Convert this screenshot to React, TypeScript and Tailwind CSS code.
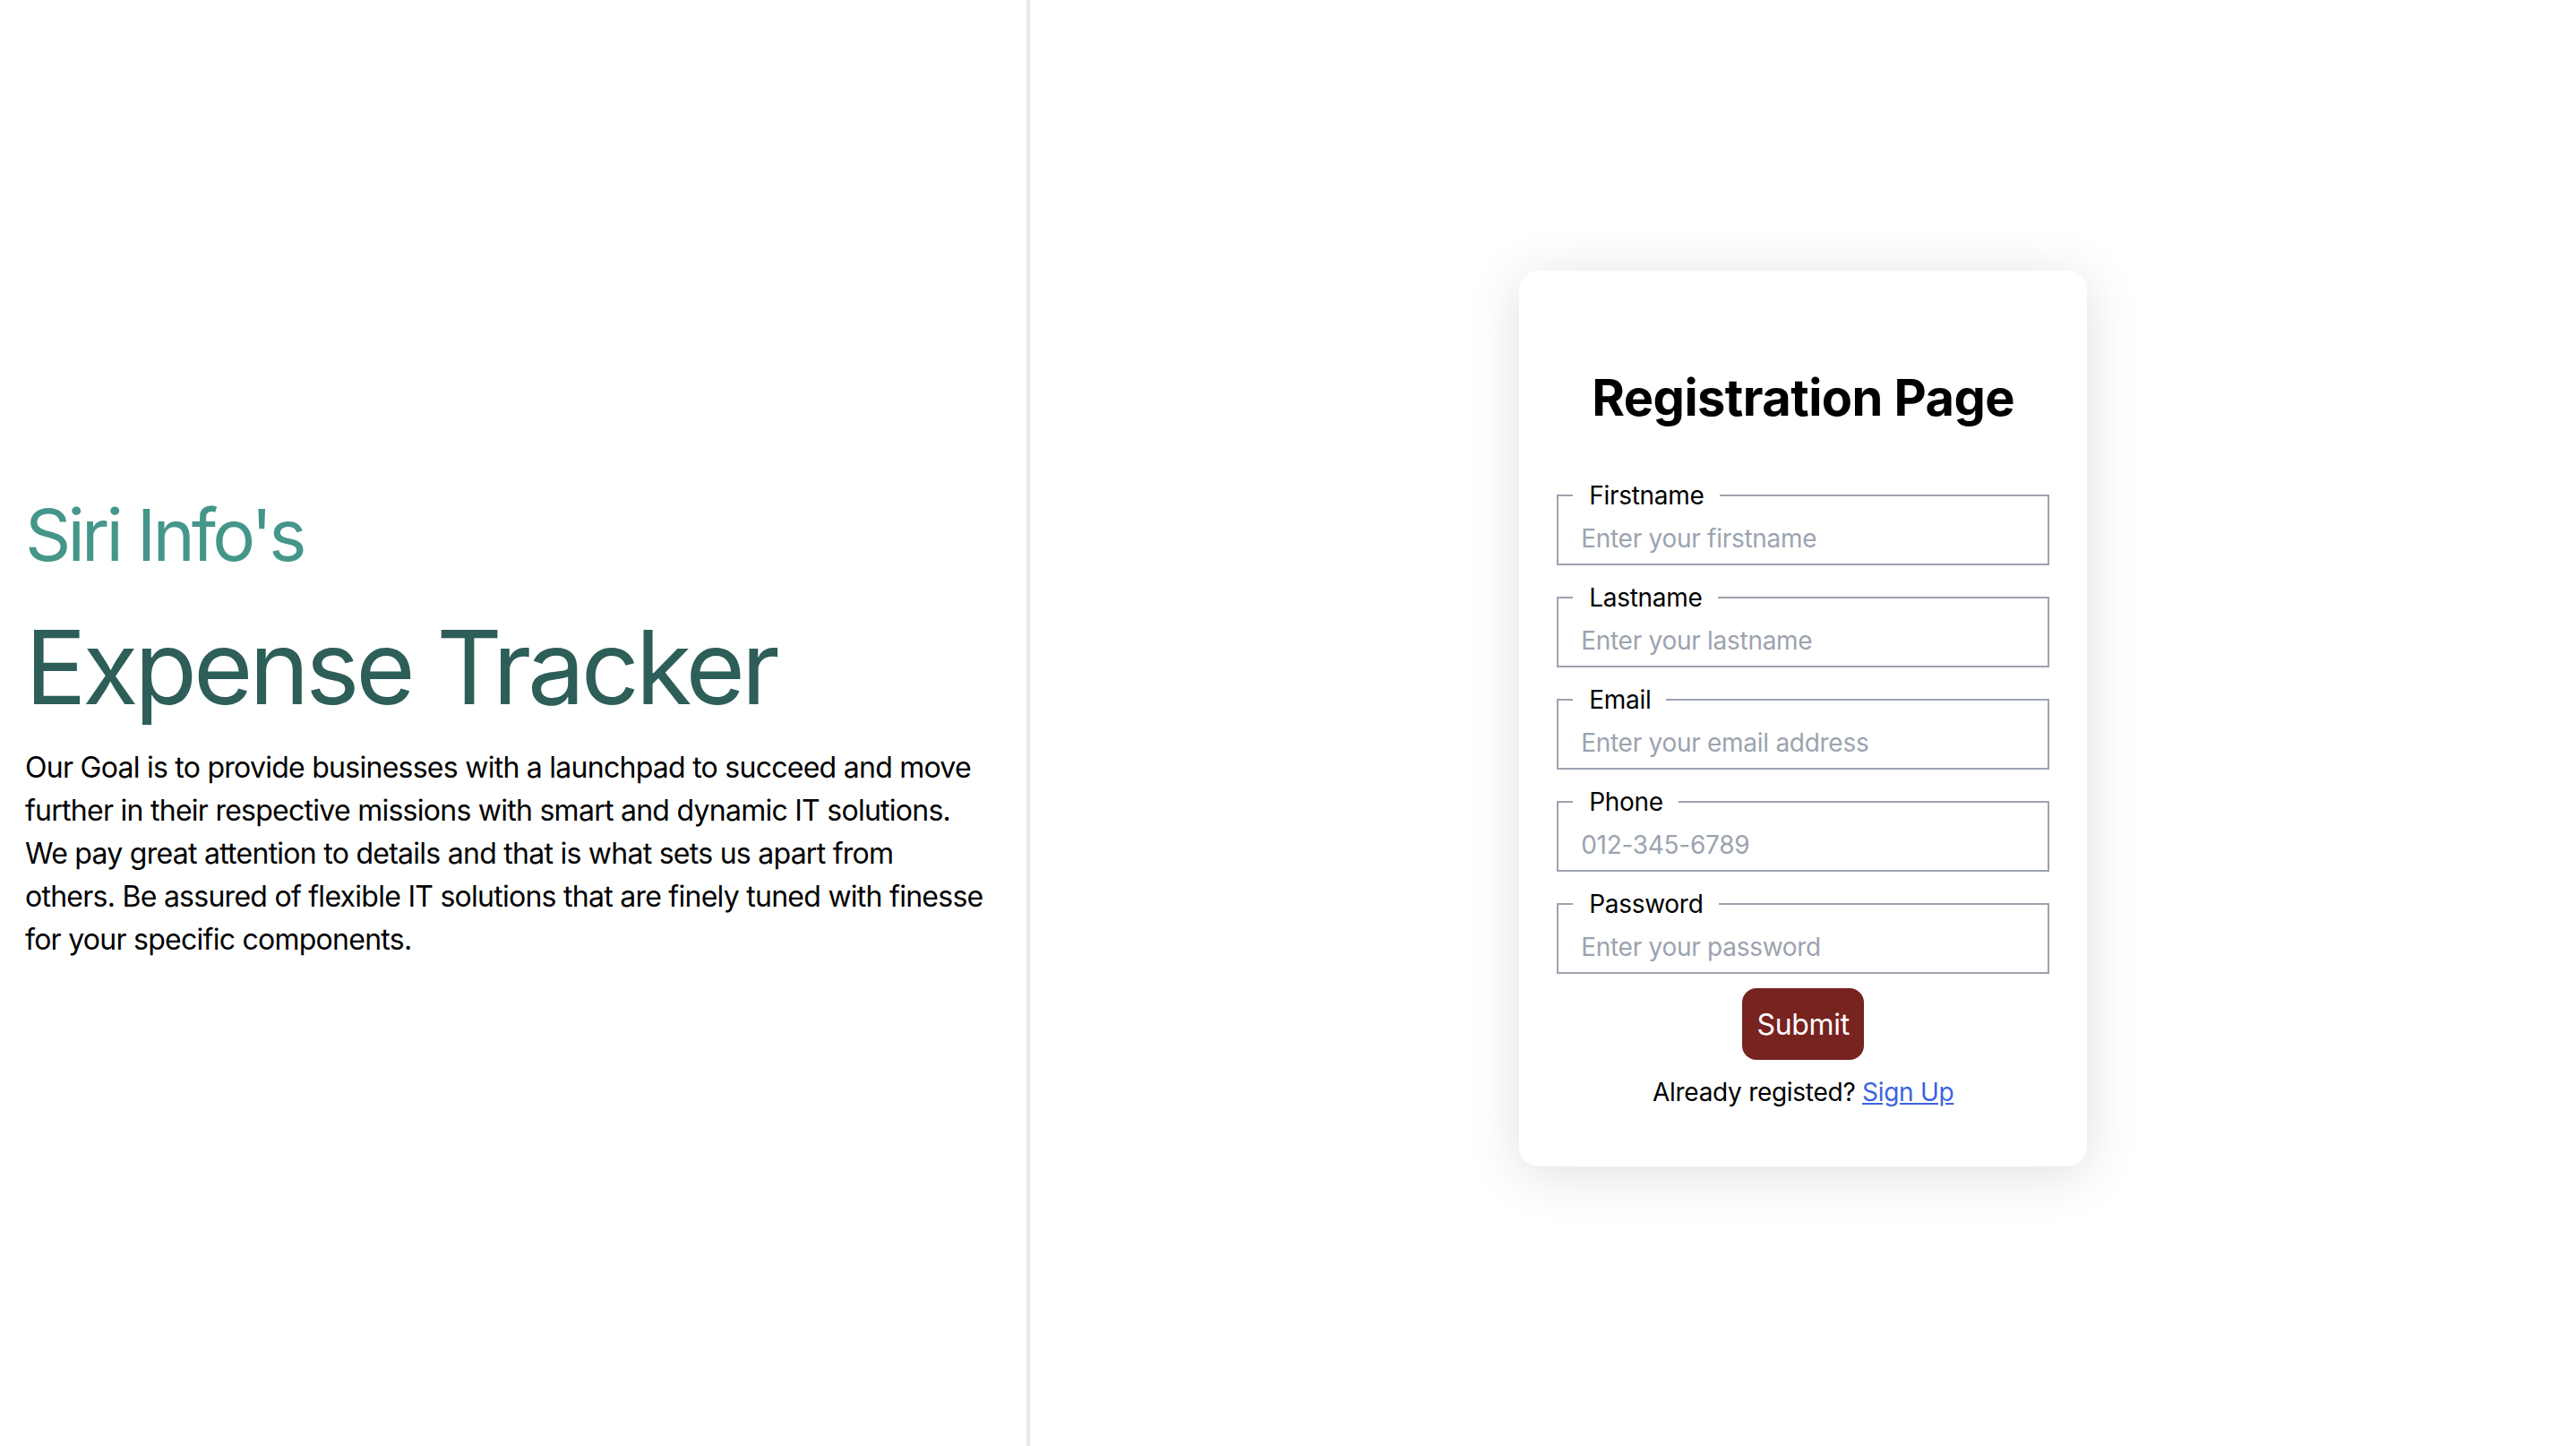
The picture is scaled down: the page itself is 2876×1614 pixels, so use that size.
import React, { useState } from 'react';

type Field = {
  name: string;
  label: string;
  type: string;
  placeholder: string;
};

const fields: Field[] = [
  { name: 'firstname', label: 'Firstname', type: 'text', placeholder: 'Enter your firstname' },
  { name: 'lastname', label: 'Lastname', type: 'text', placeholder: 'Enter your lastname' },
  { name: 'email', label: 'Email', type: 'email', placeholder: 'Enter your email address' },
  { name: 'phone', label: 'Phone', type: 'tel', placeholder: '012-345-6789' },
  { name: 'password', label: 'Password', type: 'password', placeholder: 'Enter your password' },
];

const App: React.FC = () => {
  const [values, setValues] = useState<Record<string, string>>({});

  const handleChange = (name: string, value: string) => {
    setValues((prev) => ({ ...prev, [name]: value }));
  };

  return (
    <div className="flex h-screen w-full bg-white text-black font-['Inter','Noto_Sans',sans-serif]">
      {/* left: branding */}
      <div className="flex h-full w-2/5 shrink-0 flex-col justify-center border-r-4 border-[#e5e7eb] pt-[8px] pl-[28px] pr-[28px]">
        <h2 className="text-[80px] font-normal leading-[96px] tracking-[-0.048em] text-[#45968a]">Siri Info's</h2>
        <h1 className="mt-[34px] text-[114px] font-normal leading-[132px] tracking-[-0.037em] text-[#2d5e58]">
          Expense Tracker
        </h1>
        <p className="mt-[22px] text-[32px] leading-[48px] tracking-[-0.023em] text-black">
          Our Goal is to provide businesses with a launchpad to succeed and move
          <br />
          further in their respective missions with smart and dynamic IT solutions.
          <br />
          We pay great attention to details and that is what sets us apart from
          <br />
          others. Be assured of flexible IT solutions that are finely tuned with finesse
          <br />
          for your specific components.
        </p>
      </div>

      {/* right: form */}
      <div className="flex h-full flex-1 items-center justify-center pb-[10px]">
        <form
          onSubmit={(e) => e.preventDefault()}
          className="flex w-[634px] flex-col items-center rounded-[22px] bg-white px-[42px] pt-[107px] pb-[63px] shadow-[0_8px_60px_rgba(0,0,0,0.13)]"
        >
          <h3 className="text-[56px] font-bold leading-[70px] tracking-[-0.01em] text-black">Registration Page</h3>

          <div className="mt-[54px] flex w-full flex-col gap-[16px]">
            {fields.map((f) => (
              <fieldset key={f.name} className="w-full border-2 border-[#9ca3af] pl-[16px] pr-[13px] pb-[8px]">
                <legend className="pl-[18px] pr-[17px] text-[28px] leading-[40px] tracking-[-0.01em] text-black">
                  {f.label}
                </legend>
                <input
                  type={f.type}
                  name={f.name}
                  value={values[f.name] ?? ''}
                  onChange={(e) => handleChange(f.name, e.target.value)}
                  placeholder={f.placeholder}
                  className="-ml-[3px] block w-full px-[12px] pt-[8px] pb-0 text-[28px] leading-[40px] tracking-[-0.01em] text-black outline-none placeholder:text-[#9ca3af]"
                />
              </fieldset>
            ))}
          </div>

          <button
            type="submit"
            className="mt-[16px] rounded-[16px] bg-[#77231f] px-[16px] pt-[17px] pb-[15px] text-[32px] leading-[48px] tracking-[-0.01em] text-white"
          >
            Submit
          </button>

          <p className="mt-[16px] text-[28px] leading-[40px] tracking-[-0.01em] text-black">
            Already registed?{' '}
            <a href="#" className="text-[#3b63e0] underline">
              Sign Up
            </a>
          </p>
        </form>
      </div>
    </div>
  );
};

export default App;
